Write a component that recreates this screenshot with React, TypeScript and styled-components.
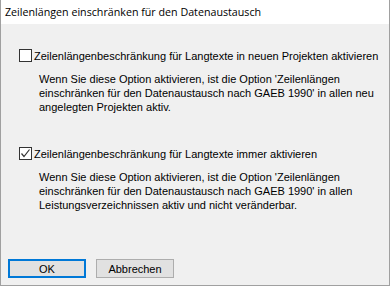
import React from 'react';
import styled, { createGlobalStyle } from 'styled-components';

const GlobalStyle = createGlobalStyle`
  html, body {
    margin: 0;
    padding: 0;
    background: #f0f0f0;
  }
`;

export default function App() {
  return (
    <>
      <GlobalStyle />
      <Window>
        <TitleBar>Zeilenlängen einschränken für den Datenaustausch</TitleBar>
        <Body>
          <Option>
            <CheckRow>
              <CheckBox>{null}</CheckBox>
              <Label>Zeilenlängenbeschränkung für Langtexte in neuen Projekten aktivieren</Label>
            </CheckRow>
            <Description>
              Wenn Sie diese Option aktivieren, ist die Option 'Zeilenlängen
              <br />
              einschränken für den Datenaustausch nach GAEB 1990' in allen neu
              <br />
              angelegten Projekten aktiv.
            </Description>
          </Option>

          <Option $spaced>
            <CheckRow>
              <CheckBox>
                <svg width="11" height="11" viewBox="0 0 11 11">
                  <path d="M1.5 5.5 L4 8.5 L9.5 1.5" fill="none" stroke="#333" strokeWidth="1.2" />
                </svg>
              </CheckBox>
              <Label>Zeilenlängenbeschränkung für Langtexte immer aktivieren</Label>
            </CheckRow>
            <Description>
              Wenn Sie diese Option aktivieren, ist die Option 'Zeilenlängen
              <br />
              einschränken für den Datenaustausch nach GAEB 1990' in allen
              <br />
              Leistungsverzeichnissen aktiv und nicht veränderbar.
            </Description>
          </Option>

          <ButtonRow>
            <Button $primary>OK</Button>
            <Button>Abbrechen</Button>
          </ButtonRow>
        </Body>
      </Window>
    </>
  );
}

const Window = styled.div`
  width: 390px;
  height: 286px;
  box-sizing: border-box;
  display: flex;
  flex-direction: column;
  border: 1px solid #a0a0a0;
  border-top: none;
  background: #f0f0f0;
`;

const TitleBar = styled.div`
  height: 24px;
  background: #fff;
  padding-left: 4px;
  font-family: 'Open Sans', 'Noto Sans', sans-serif;
  font-size: 10.7px;
  line-height: 24px;
  color: #000;
`;

const Body = styled.div`
  flex: 1;
  display: flex;
  flex-direction: column;
  padding: 25px 16px 7px 18px;
  font-family: 'Liberation Sans', Arial, sans-serif;
  font-size: 11px;
  color: #000;
`;

const Option = styled.div<{ $spaced?: boolean }>`
  display: flex;
  flex-direction: column;
  margin-top: ${(p) => (p.$spaced ? '33px' : '0')};
`;

const CheckRow = styled.div`
  display: flex;
  align-items: center;
  height: 13px;
`;

const CheckBox = styled.span`
  width: 13px;
  height: 13px;
  box-sizing: border-box;
  border: 1px solid #333;
  background: #fff;
  margin-right: 2px;
  display: flex;
  align-items: center;
  justify-content: center;
  flex-shrink: 0;
`;

const Label = styled.span`
  white-space: nowrap;
`;

const Description = styled.div`
  margin-top: 10px;
  padding-left: 20px;
  line-height: 14px;
  white-space: nowrap;
`;

const ButtonRow = styled.div`
  margin-top: auto;
  margin-left: -11px;
  display: flex;
  gap: 10px;
`;

const Button = styled.button<{ $primary?: boolean }>`
  width: 78px;
  height: 19px;
  box-sizing: border-box;
  padding: 0;
  background: #e1e1e1;
  border: ${(p) => (p.$primary ? '2px solid #0078d7' : '1px solid #adadad')};
  font-family: 'Liberation Sans', Arial, sans-serif;
  font-size: 11px;
  color: #000;
`;
